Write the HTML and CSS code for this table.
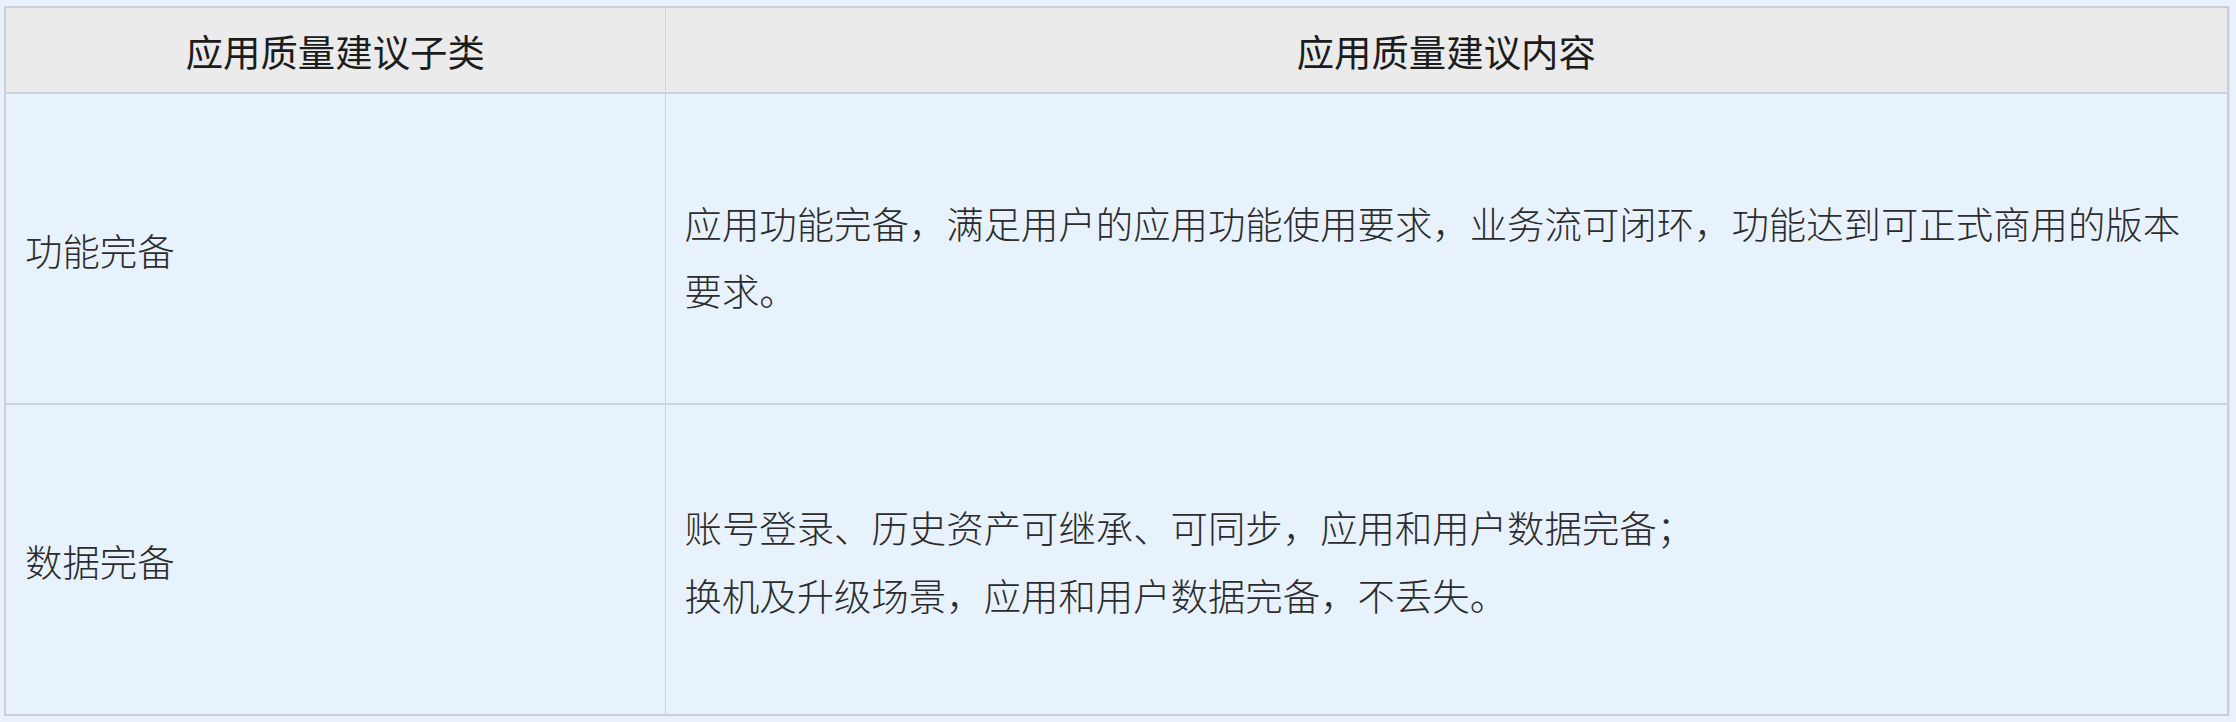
FILE: index.html
```html
<!DOCTYPE html>
<html lang="zh-CN">
<head>
<meta charset="utf-8">
<title>应用质量建议</title>
<link rel="stylesheet" href="styles.css">
</head>
<body>
<div class="page">
  <table class="quality-table">
    <colgroup>
      <col class="col-sub">
      <col class="col-content">
    </colgroup>
    <thead>
      <tr class="head-row">
        <th>应用质量建议子类</th>
        <th>应用质量建议内容</th>
      </tr>
    </thead>
    <tbody>
      <tr class="body-row">
        <td class="cell-sub">功能完备</td>
        <td class="cell-content cell-first">应用功能完备，满足用户的应用功能使用要求，业务流可闭环，功能达到可正式商用的版本要求。</td>
      </tr>
      <tr class="body-row">
        <td class="cell-sub">数据完备</td>
        <td class="cell-content">账号登录、历史资产可继承、可同步，应用和用户数据完备；<br>换机及升级场景，应用和用户数据完备，不丢失。</td>
      </tr>
    </tbody>
  </table>
</div>
</body>
</html>
```

FILE: styles.css
```css
html, body {
  margin: 0;
  padding: 0;
  background: #e9f2fc;
}

.page {
  padding: 6px 0 0 4px;
}

.quality-table {
  width: 2225px;
  border-collapse: collapse;
  table-layout: fixed;
  border: 2px solid #c9d0d9;
  box-shadow: 1px 1px 0 #d9e0e8;
  font-family: "Noto Sans CJK SC", "Noto Sans", sans-serif;
  font-size: 37.4px;
  font-weight: 300;
}

.col-sub {
  width: 660px;
}

.head-row th {
  height: 81px;
  padding: 3px 0 0 0;
  background: #ebebeb;
  color: #1c1c1c;
  font-weight: 400;
  text-align: center;
  vertical-align: middle;
  border: 1px solid #cfd3d8;
  border-bottom: 2px solid #cdd2d8;
  line-height: 1.2;
}

.body-row td {
  height: 311px;
  background: #e8f2fc;
  color: #2c2c2c;
  border: 1px solid #cbd2da;
  vertical-align: middle;
  line-height: 67.5px;
  padding: 4px 20px 0 19px;
  box-sizing: border-box;
}

.body-row + .body-row td {
  border-top: 2px solid #cdd3db;
}

.body-row td.cell-first {
  padding-top: 17px;
}
```
